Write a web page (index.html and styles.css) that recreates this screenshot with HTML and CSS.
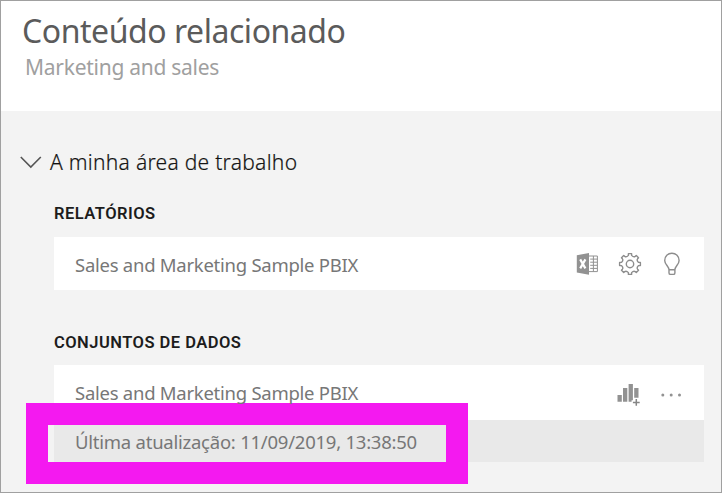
FILE: index.html
```html
<!DOCTYPE html>
<html lang="pt">
<head>
<meta charset="utf-8">
<title>Conteúdo relacionado</title>
<link rel="stylesheet" href="styles.css">
</head>
<body>
<div class="pane">
  <header class="head">
    <h1 class="title">Conteúdo relacionado</h1>
    <p class="subtitle">Marketing and sales</p>
  </header>
  <main class="content">
    <div class="workspace">
      <svg class="chevron" width="22" height="13" viewBox="0 0 22 13"><path d="M.8 1 10.8 11 20.8 1"/></svg>
      <span class="workspace-name">A minha área de trabalho</span>
    </div>
    <section class="group">
      <h2 class="label label-reports">RELATÓRIOS</h2>
      <div class="card">
        <span class="name">Sales and Marketing Sample PBIX</span>
        <div class="actions">
          <svg class="icon" width="24" height="24" viewBox="0 0 24 24">
            <path class="fill" d="M.8 3.2 13 1v21.8L.8 20.6z"/>
            <path class="line" d="M13 4h8.4v15.6H13M14.2 7.1h7.2M14.2 10.2h7.2M14.2 13.3h7.2M14.2 16.4h7.2M17.4 4v15.6"/>
            <path class="cross" d="m4.2 7.4 5.2 9M9.4 7.4l-5.2 9"/>
          </svg>
          <svg class="icon" width="24" height="24" viewBox="-12 -12 24 24">
            <path class="outline" d="M-1.6-10.4H1.6V-8.6Q3.6-6.4 5.2-7.6L6.3-8.5 8.5-6.3 7.6-5.2Q6.4-3.6 8.6-1.6H10.4V1.6H8.6Q6.4 3.6 7.6 5.2L8.5 6.3 6.3 8.5 5.2 7.6Q3.6 6.4 1.6 8.6V10.4H-1.6V8.6Q-3.6 6.4-5.2 7.6L-6.3 8.5-8.5 6.3-7.6 5.2Q-6.4 3.6-8.6 1.6H-10.4V-1.6H-8.6Q-6.4-3.6-7.6-5.2L-8.5-6.3-6.3-8.5-5.2-7.6Q-3.6-6.4-1.6-8.6z"/>
            <circle class="outline" r="3.7"/>
          </svg>
          <svg class="icon" width="24" height="24" viewBox="0 0 24 24">
            <path class="outline" d="M9 17.8C9 14.4 4.7 12.4 4.7 8.4a7.2 7.2 0 0 1 14.4 0c0 4-4.2 6-4.2 9.4zM9 17.8v3.1q0 1.5 1.5 1.5h2.9q1.5 0 1.5-1.5v-3.1"/>
          </svg>
        </div>
      </div>
    </section>
    <section class="group">
      <h2 class="label label-datasets">CONJUNTOS DE DADOS</h2>
      <div class="card dataset">
        <span class="name">Sales and Marketing Sample PBIX</span>
        <div class="actions">
          <svg class="icon" width="24" height="24" viewBox="0 0 24 24">
            <path class="fill" d="M-.5 14h4.3v6.8H-.5zM5 7h4.3v13.8H5zM10.6 3h4.3v16.3h-1.3v1.5h-3zM16.2 7h4.3v9.8h-4.3z"/>
            <path class="plus" d="M14.9 21.4h6.8M18.3 18v6.8"/>
          </svg>
          <svg class="icon" width="24" height="24" viewBox="0 0 24 24">
            <circle class="fill" cx="2.8" cy="14" r="1.5"/><circle class="fill" cx="11.2" cy="14" r="1.5"/><circle class="fill" cx="19.5" cy="14" r="1.5"/>
          </svg>
        </div>
      </div>
      <div class="refresh">
        <span class="refresh-text">Última atualização: 11/09/2019, 13:38:50</span>
        <div class="highlight"></div>
      </div>
    </section>
  </main>
</div>
</body>
</html>
```
FILE: styles.css
```css
* { box-sizing: border-box; }
body { margin: 0; font-family: "Noto Sans", "Open Sans", sans-serif; }
h1, h2, p { margin: 0; font-weight: 400; }
.pane {
  width: 722px;
  height: 493px;
  border: 1px solid #a0a0a0;
  background: #f3f3f3;
  overflow: hidden;
}
.head { height: 110px; padding: 10px 0 0 21px; background: #fff; }
.title { font-size: 32px; line-height: 40px; letter-spacing: -.46px; color: #5b5b5b; white-space: nowrap; }
.subtitle { padding-left: 3px; font-size: 21px; line-height: 32px; letter-spacing: -.27px; color: #a0a0a0; white-space: nowrap; }
.content { padding-top: 36px; }
.workspace { display: flex; align-items: center; height: 30px; padding-left: 19px; gap: 8px; }
.chevron { fill: none; stroke: #555; stroke-width: 1.6; }
.workspace-name { font-size: 21px; font-weight: 300; line-height: 30px; letter-spacing: .28px; color: #111; -webkit-text-stroke: .2px #222; white-space: nowrap; }
.group { width: 650px; margin-left: 53px; }
.group + .group { margin-top: 43px; }
.label { font-family: Roboto, sans-serif; font-weight: 600; font-size: 16.5px; line-height: 20px; letter-spacing: .48px; color: #1c1c1c; white-space: nowrap; }
.label-reports { margin-top: 27px; height: 33px; }
.label-datasets { height: 32px; }
.card { display: flex; align-items: center; justify-content: space-between; height: 53px; padding: 0 20px 0 21px; background: #fff; }
.dataset { height: 55px; }
.name, .refresh-text { position: relative; z-index: 2; font-size: 18.5px; line-height: 26px; letter-spacing: -.26px; color: #777; white-space: nowrap; }
.card:not(.dataset) .name { padding-top: 2px; }
.refresh-text { padding-top: 1px; letter-spacing: -.24px; }
.actions { display: flex; gap: 18px; }
.icon { display: block; overflow: visible; }
.fill { fill: #929292; }
.line { fill: none; stroke: #929292; stroke-width: 1; }
.cross { fill: none; stroke: #fff; stroke-width: 2.2; }
.outline { fill: none; stroke: #8d8d8d; stroke-width: 1.4; stroke-linejoin: round; }
.plus { fill: none; stroke: #858585; stroke-width: 1.5; }
.refresh { position: relative; display: flex; align-items: center; height: 42px; padding-left: 21px; background: #e9e9e9; }
.highlight { position: absolute; z-index: 1; left: -28px; top: -17px; width: 442px; height: 81px; border: 22px solid #f419f0; }
```
